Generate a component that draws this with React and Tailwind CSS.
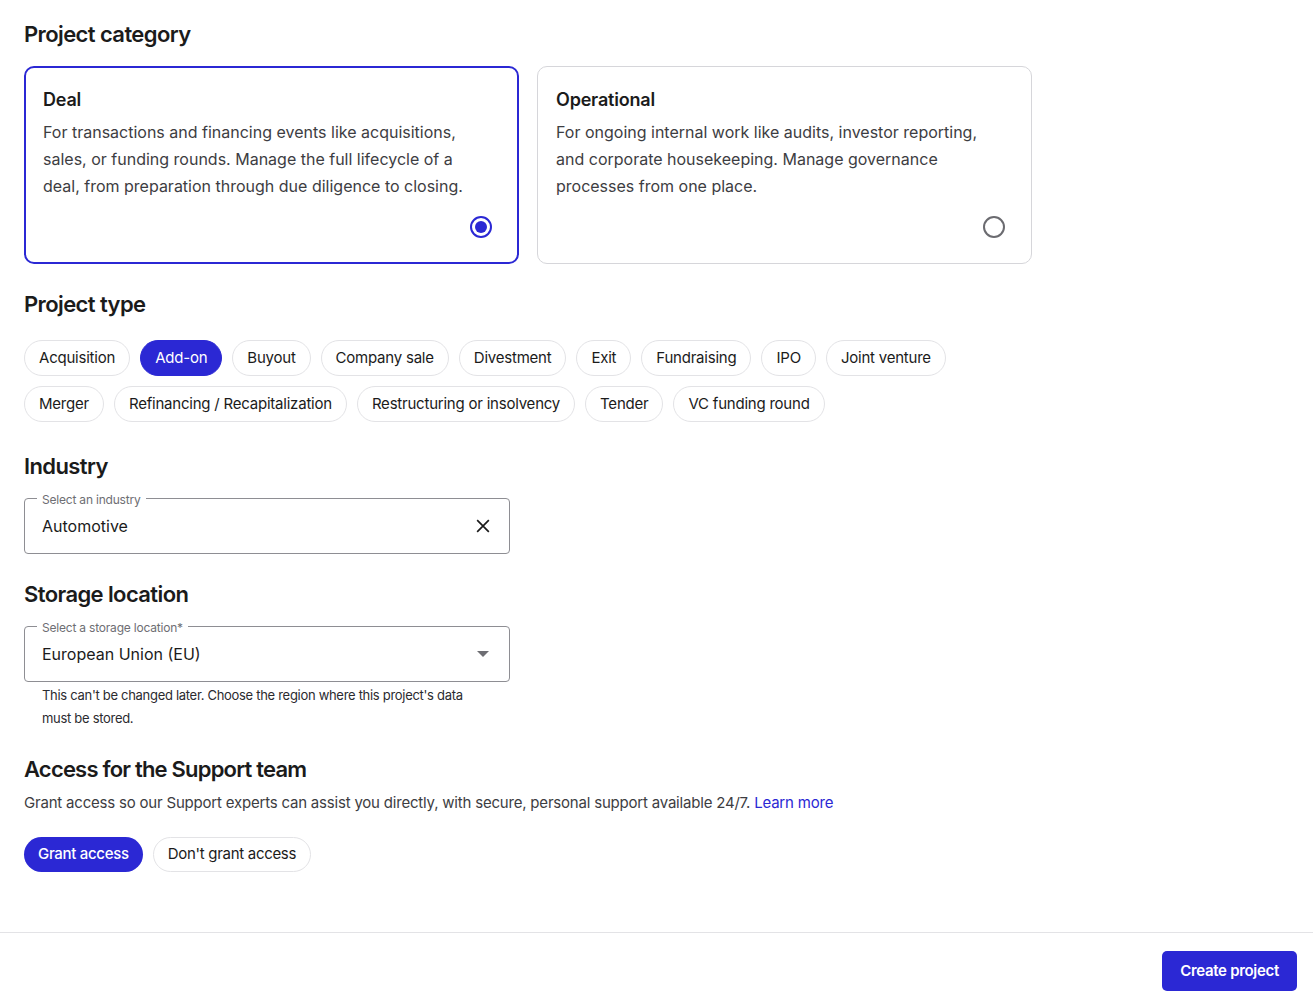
import { useState } from "react";

const types = [
  "Acquisition",
  "Add-on",
  "Buyout",
  "Company sale",
  "Divestment",
  "Exit",
  "Fundraising",
  "IPO",
  "Joint venture",
  "Merger",
  "Refinancing / Recapitalization",
  "Restructuring or insolvency",
  "Tender",
  "VC funding round",
];

function CategoryCard({ title, text, selected, onClick }) {
  return (
    <button
      onClick={onClick}
      className={`w-[495px] h-[198px] text-left rounded-[10px] flex flex-col bg-white ${
        selected
          ? "border-2 border-[#2b28d4] pl-[17px] pr-[17px] pt-[20px] pb-[24px]"
          : "border border-[#d6d6da] pl-[18px] pr-[18px] pt-[21px] pb-[25px]"
      }`}
    >
      <div className="text-[18px] leading-[24px] font-semibold text-[#1b1b1b] tracking-[-0.2px]">{title}</div>
      <p className="mt-[7px] w-[450px] text-[16px] leading-[27px] text-[#3d3d42]">{text}</p>
      <div className="mt-auto flex justify-end pr-[8px]">
        {selected ? (
          <span className="w-[22px] h-[22px] rounded-full border-2 border-[#2b28d4] flex items-center justify-center">
            <span className="w-[12px] h-[12px] rounded-full bg-[#2b28d4]" />
          </span>
        ) : (
          <span className="w-[22px] h-[22px] rounded-full border-2 border-[#6b6b70]" />
        )}
      </div>
    </button>
  );
}

function OutlinedField({ label, value, children }) {
  return (
    <div className="relative w-[486px] h-[56px] border border-[#8e8e93] rounded-[4px] flex items-center pl-[17px] pr-[16px]">
      <span className="absolute -top-[6px] left-[12px] bg-white px-[5px] text-[12px] leading-[14px] text-[#6e6e73] tracking-[-0.2px]">
        {label}
      </span>
      <span className="flex-1 text-[16px] text-[#1b1b1b]">{value}</span>
      {children}
    </div>
  );
}

export default function App() {
  const [category, setCategory] = useState("deal");
  const [type, setType] = useState("Add-on");
  const [access, setAccess] = useState("grant");

  return (
    <div className="min-h-[1004px] bg-white flex flex-col font-['Inter',sans-serif] text-[#1b1b1b]">
      <div className="px-[24px] pt-[20px] flex-1">
        <h2 className="text-[22px] leading-[28px] font-semibold tracking-[-0.6px]">Project category</h2>
        <div className="mt-[18px] flex gap-[18px]">
          <CategoryCard
            title="Deal"
            text="For transactions and financing events like acquisitions, sales, or funding rounds. Manage the full lifecycle of a deal, from preparation through due diligence to closing."
            selected={category === "deal"}
            onClick={() => setCategory("deal")}
          />
          <CategoryCard
            title="Operational"
            text="For ongoing internal work like audits, investor reporting, and corporate housekeeping. Manage governance processes from one place."
            selected={category === "ops"}
            onClick={() => setCategory("ops")}
          />
        </div>

        <h2 className="mt-[26px] text-[22px] leading-[28px] font-semibold tracking-[-0.6px]">Project type</h2>
        <div className="mt-[22px] flex flex-wrap gap-x-[10px] gap-y-[10px] w-[940px]">
          {types.map((t) => (
            <button
              key={t}
              onClick={() => setType(t)}
              className={`h-[36px] px-[14px] rounded-full text-[15px] tracking-[-0.22px] ${
                type === t
                  ? "bg-[#2b28d4] text-white border border-[#2b28d4]"
                  : "bg-white text-[#1b1b1b] border border-[#e3e3e6]"
              }`}
            >
              {t}
            </button>
          ))}
        </div>

        <h2 className="mt-[30px] text-[22px] leading-[28px] font-semibold tracking-[-0.6px]">Industry</h2>
        <div className="mt-[18px]">
          <OutlinedField label="Select an industry" value="Automotive">
            <svg width="20" height="20" viewBox="0 0 24 24" fill="none" stroke="#1b1b1b" strokeWidth="2">
              <path d="M5 5l14 14M19 5L5 19" />
            </svg>
          </OutlinedField>
        </div>

        <h2 className="mt-[26px] text-[22px] leading-[28px] font-semibold tracking-[-0.6px]">Storage location</h2>
        <div className="mt-[18px]">
          <OutlinedField label="Select a storage location*" value="European Union (EU)">
            <svg width="14" height="8" viewBox="0 0 14 8" className="mr-[3px]">
              <path d="M1 1h12L7 7z" fill="#6e6e73" />
            </svg>
          </OutlinedField>
          <p className="mt-[2px] pl-[18px] w-[470px] text-[13px] leading-[23px] text-[#2b2b2f] tracking-[-0.3px]">
            This can't be changed later. Choose the region where this project's data must be stored.
          </p>
        </div>

        <h2 className="mt-[25px] text-[22px] leading-[28px] font-semibold tracking-[-0.8px]">
          Access for the Support team
        </h2>
        <p className="mt-[9px] text-[15px] leading-[22px] text-[#3d3d42] tracking-[-0.2px]">
          Grant access so our Support experts can assist you directly, with secure, personal support available 24/7.{" "}
          <a href="#" className="text-[#2b28d4]">Learn more</a>
        </p>
        <div className="mt-[23px] flex gap-[10px]">
          <button
            onClick={() => setAccess("grant")}
            className={`h-[35px] px-[14px] rounded-full text-[15px] tracking-[-0.3px] ${
              access === "grant" ? "bg-[#2b28d4] text-white font-medium" : "border border-[#e3e3e6] bg-white"
            }`}
          >
            Grant access
          </button>
          <button
            onClick={() => setAccess("deny")}
            className={`h-[35px] px-[14px] rounded-full text-[15px] tracking-[-0.3px] ${
              access === "deny" ? "bg-[#2b28d4] text-white font-medium" : "border border-[#e3e3e6] bg-white text-[#1b1b1b]"
            }`}
          >
            Don't grant access
          </button>
        </div>
      </div>

      <div className="mt-[60px] border-t border-[#e3e3e6] h-[72px] flex items-start justify-end pt-[18px] pr-[16px]">
        <button className="h-[40px] px-[18px] rounded-[5px] bg-[#2b28d4] text-white text-[15px] font-semibold tracking-[-0.3px]">
          Create project
        </button>
      </div>
    </div>
  );
}
